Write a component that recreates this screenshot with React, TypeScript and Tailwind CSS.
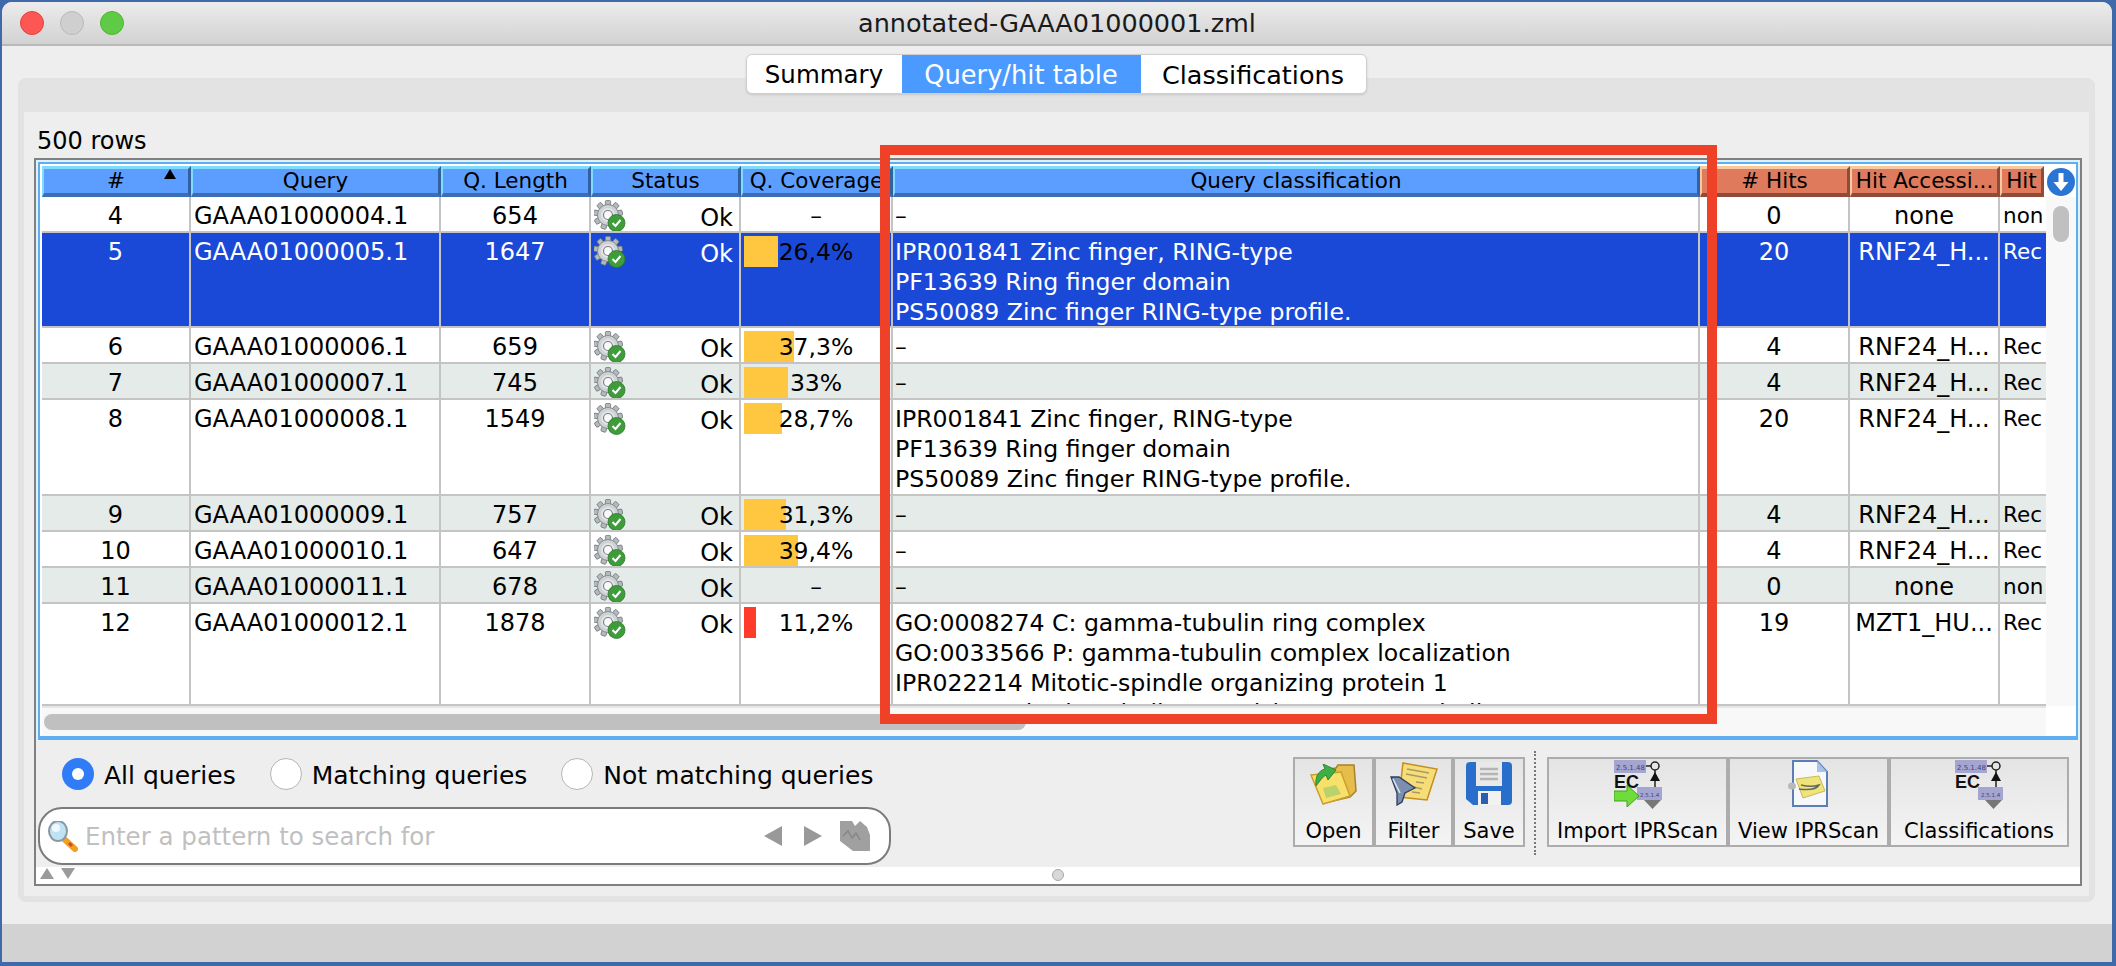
import { ReactNode } from "react";

const FONT = "font-['DejaVu_Sans',sans-serif]";

// Column widths in px, first to last
const COLS = {
  num: "w-[149px]",
  query: "w-[250px]",
  len: "w-[150px]",
  status: "w-[150px]",
  cov: "w-[152px]",
  cls: "w-[807px]",
  hits: "w-[150px]",
  acc: "w-[150px]",
  hit: "w-[44px]",
};

interface Row {
  id: number;
  query: string;
  len: number;
  cov?: string;
  bar?: number;
  barRed?: boolean;
  cls: string[];
  hits: number;
  acc: string;
  hit: string;
  h: string;
  zebra?: boolean;
  selected?: boolean;
}

const ring = [
  "IPR001841 Zinc finger, RING-type",
  "PF13639 Ring finger domain",
  "PS50089 Zinc finger RING-type profile.",
];

const rows: Row[] = [
  { id: 4, query: "GAAA01000004.1", len: 654, cls: ["–"], hits: 0, acc: "none", hit: "non", h: "h-[36px]" },
  { id: 5, query: "GAAA01000005.1", len: 1647, cov: "26,4%", bar: 34, cls: ring, hits: 20, acc: "RNF24_H...", hit: "Rec", h: "h-[95px]", selected: true },
  { id: 6, query: "GAAA01000006.1", len: 659, cov: "37,3%", bar: 50, cls: ["–"], hits: 4, acc: "RNF24_H...", hit: "Rec", h: "h-[36px]" },
  { id: 7, query: "GAAA01000007.1", len: 745, cov: "33%", bar: 44, cls: ["–"], hits: 4, acc: "RNF24_H...", hit: "Rec", h: "h-[36px]", zebra: true },
  { id: 8, query: "GAAA01000008.1", len: 1549, cov: "28,7%", bar: 38, cls: ring, hits: 20, acc: "RNF24_H...", hit: "Rec", h: "h-[96px]" },
  { id: 9, query: "GAAA01000009.1", len: 757, cov: "31,3%", bar: 42, cls: ["–"], hits: 4, acc: "RNF24_H...", hit: "Rec", h: "h-[36px]", zebra: true },
  { id: 10, query: "GAAA01000010.1", len: 647, cov: "39,4%", bar: 54, cls: ["–"], hits: 4, acc: "RNF24_H...", hit: "Rec", h: "h-[36px]" },
  { id: 11, query: "GAAA01000011.1", len: 678, cls: ["–"], hits: 0, acc: "none", hit: "non", h: "h-[36px]", zebra: true },
  {
    id: 12,
    query: "GAAA01000012.1",
    len: 1878,
    cov: "11,2%",
    bar: 12,
    barRed: true,
    cls: [
      "GO:0008274 C: gamma-tubulin ring complex",
      "GO:0033566 P: gamma-tubulin complex localization",
      "IPR022214 Mitotic-spindle organizing protein 1",
      "PF12554 Mitotic-spindle organizing gamma-tubulin",
    ],
    hits: 19,
    acc: "MZT1_HU...",
    hit: "Rec",
    h: "h-[102px]",
  },
];

function GearOk() {
  return (
    <svg width="32" height="33" viewBox="0 0 32 33" className="shrink-0">
      <g transform="translate(14 15)">
        {[0, 40, 80, 120, 160, 200, 240, 280, 320].map((a) => (
          <rect key={a} x="-2.6" y="-14.5" width="5.2" height="7" rx="1" fill="#b4b9bc" stroke="#6f7579" strokeWidth="0.8" transform={`rotate(${a})`} />
        ))}
        <circle r="10.5" fill="#ced2d4" stroke="#858b8f" strokeWidth="1" />
        <circle r="7" fill="#e3e5e6" />
        <circle r="4.5" fill="#fafafa" stroke="#7b8185" strokeWidth="1.2" />
      </g>
      <circle cx="22.5" cy="23" r="8.5" fill="#3f9c3b" stroke="#2d7a2b" strokeWidth="0.8" />
      <path d="M18.500 23l3 3 5-6" fill="none" stroke="#fff" strokeWidth="2" />
    </svg>
  );
}

function HeadCell({ w, red, children }: { w: string; red?: boolean; children?: ReactNode }) {
  return (
    <div
      className={`${w} h-full shrink-0 flex items-center justify-center relative overflow-hidden whitespace-nowrap pt-px text-[21.5px] text-black border-t-[3px] border-b-[4px] border-l-2 border-r-[3px] ${
        red
          ? "bg-[#df7a5d] border-t-[#f8c9a0] border-l-[#f8c9a0] border-b-[#8f4c3a] border-r-[#8f4c3a]"
          : "bg-[#5c9eff] border-t-[#7fdcff] border-l-[#7fdcff] border-b-[#3c6db5] border-r-[#33619f]"
      }`}
    >
      {children}
    </div>
  );
}

function Cell({ w, className, children }: { w: string; className?: string; children?: ReactNode }) {
  return <div className={`${w} shrink-0 h-full border-r-2 border-[#c4c4c4] overflow-hidden whitespace-nowrap ${className ?? ""}`}>{children}</div>;
}

function TableRow({ row }: { row: Row }) {
  const bg = row.selected ? "bg-[#1a49d8] text-white" : row.zebra ? "bg-[#e4ebe9] text-black" : "bg-white text-black";
  return (
    <div className={`flex ${row.h} ${bg} border-b-2 border-[#c4c4c4] text-[24px] leading-[30px]`}>
      <Cell w={COLS.num} className="text-center pt-[4px]">{row.id}</Cell>
      <Cell w={COLS.query} className="pl-[3px] pt-[4px]">{row.query}</Cell>
      <Cell w={COLS.len} className="text-center pt-[4px]">{row.len}</Cell>
      <Cell w={COLS.status} className="flex justify-between pl-[3px] pr-[6px] pt-[3px]">
        <GearOk />
        <span className="pt-[3px]">Ok</span>
      </Cell>
      <Cell w={COLS.cov} className="relative pt-[4px] text-center text-black">
        {row.bar && (
          <div className={`absolute left-[3px] top-[3px] h-[31px] ${row.barRed ? "bg-[#ff3b2b]" : "bg-[#ffc63f]"}`} style={{ width: row.bar }} />
        )}
        <span className="relative text-[23.5px]">{row.cov ?? "–"}</span>
      </Cell>
      <Cell w={COLS.cls} className="pl-[2px] pt-[4px] text-[23.6px]">
        {row.cls.map((line) => (
          <div key={line}>{line}</div>
        ))}
      </Cell>
      <Cell w={COLS.hits} className="text-center pt-[4px]">{row.hits}</Cell>
      <Cell w={COLS.acc} className="text-center pt-[4px]">{row.acc}</Cell>
      <div className={`${COLS.hit} shrink-0 pl-[3px] pt-[4px] text-[21.5px] overflow-hidden`}>{row.hit}</div>
    </div>
  );
}

function Radio({ label, checked }: { label: string; checked?: boolean }) {
  return (
    <div className="flex items-center gap-[10px]">
      {checked ? (
        <span className="w-[32px] h-[32px] rounded-full bg-[#2f7cf6] flex items-center justify-center">
          <span className="w-[12px] h-[12px] rounded-full bg-white" />
        </span>
      ) : (
        <span className="w-[32px] h-[32px] rounded-full bg-white border border-[#b5b5b5]" />
      )}
      <span className="text-[25px] leading-none pt-[2px] text-black">{label}</span>
    </div>
  );
}

function ToolButton({ w, label, children }: { w: string; label: string; children: ReactNode }) {
  return (
    <div className={`${w} h-full shrink-0 flex flex-col items-center border-2 border-[#acacac] bg-gradient-to-b from-[#e4e4e4] to-[#f4f4f4]`}>
      <div className="h-[50px] flex items-center justify-center">{children}</div>
      <span className="text-[21px] leading-[21px] mt-[12px] text-black whitespace-nowrap">{label}</span>
    </div>
  );
}

function FolderIcon() {
  return (
    <svg width="47" height="41" viewBox="0 0 47 41">
      <path d="M20 5l6-1 2-3 16 0 2 26-6 6-26 6z" fill="#e6bd4a" stroke="#a9812a" strokeWidth="1.500" />
      <path d="M1 11l30-3 9 24-27 8z" fill="#f8e06a" stroke="#c9a02e" strokeWidth="1.500" />
      <path d="M13 24l13-3 5 9-15 4z" fill="#b9d36a" />
      <path d="M6 22C5 13 8 7 15 5l-2-5 13 6-8 10-2-5c-4 2-6 6-10 11z" fill="#3fae45" stroke="#2b8a33" />
    </svg>
  );
}

function FilterIcon() {
  return (
    <svg width="48" height="44" viewBox="0 0 48 44">
      <path d="M13 1l34 6-10 31-28-3z" fill="#f6dd78" stroke="#c58d22" strokeWidth="1.500" />
      <path d="M17 7l22 4M16 12l21 4M26 20l8 1M24 25l8 2M22 30l8 1" stroke="#a99a63" strokeWidth="1.300" />
      <path d="M1 15h8l16 11-10 5-3 9-5 3 0-12z" fill="#7d8fae" stroke="#2c3e60" strokeWidth="1.300" />
      <path d="M3 17l7 14" stroke="#dde3ec" strokeWidth="1.500" />
    </svg>
  );
}

function SaveIcon() {
  return (
    <svg width="46" height="45" viewBox="0 0 46 45">
      <path d="M4 0h38a4 4 0 0 1 4 4v35a4 4 0 0 1-4 4H7l-7-6V4a4 4 0 0 1 4-4z" fill="#2a6ecb" />
      <rect x="10" y="0" width="26" height="24" fill="#e9e9e9" />
      <path d="M14 7h18M14 12h18M14 17h18" stroke="#b5b5b5" strokeWidth="2.500" />
      <rect x="12" y="29" width="23" height="14" fill="#f2f2f2" />
      <rect x="15" y="31" width="7" height="11" fill="#2a5fb0" />
    </svg>
  );
}

function EcIcon({ arrow }: { arrow?: boolean }) {
  return (
    <svg width="48" height="49" viewBox="0 0 48 49">
      <rect x="0" y="0" width="32" height="13" fill="#a5a5d2" />
      <text x="2" y="9.500" fontSize="7" fill="#44446e" fontFamily="'DejaVu Sans', sans-serif">2.5.1.48</text>
      <path d="M32 6h5" stroke="#222" strokeWidth="1.500" />
      <circle cx="41" cy="6" r="4" fill="none" stroke="#222" strokeWidth="1.500" />
      <path d="M41 10v18" stroke="#222" strokeWidth="1.500" />
      <path d="M36 21l5-9 5 9z" fill="#111" />
      <text x="0" y="28" fontSize="18" fontWeight="700" fill="#111" fontFamily="'Liberation Sans', sans-serif">EC</text>
      <rect x="23" y="27" width="25" height="13" fill="#a5a5d2" />
      <text x="26" y="36.500" fontSize="5.500" fill="#44446e" fontFamily="'DejaVu Sans', sans-serif">2.5.1.4</text>
      <path d="M30 40h17l-8.500 9z" fill="#777" />
      {arrow && <path d="M0 31h13v-6l12 11-12 11v-6H0z" fill="#6fdc3c" stroke="#3ea21f" />}
    </svg>
  );
}

function ViewIcon() {
  return (
    <svg width="41" height="48" viewBox="0 0 41 48">
      <path d="M5 1h24l10 11v34H5z" fill="#f6f8fc" stroke="#5a7eb5" strokeWidth="2" />
      <path d="M29 1v11h10z" fill="#a8c2ea" />
      <path d="M8 19l23-3 6 15-22 7z" fill="#efe37b" stroke="#c9ba52" />
      <path d="M13 25c8 2 15 1 18 0-3 5-12 5-20 4" fill="none" stroke="#666" strokeWidth="1.500" />
      <ellipse cx="4" cy="26" rx="4" ry="3.500" fill="#b9b9b9" />
    </svg>
  );
}

export default function App() {
  return (
    <div className={`relative w-[2116px] h-[966px] overflow-hidden bg-[#3f69a9] ${FONT}`}>
      <div className="ml-[2px] mr-[4px] mt-[2px] h-[960px] rounded-t-[10px] bg-[#eeeeee] flex flex-col overflow-hidden">
        {/* Title bar */}
        <div className="h-[44px] shrink-0 flex items-center relative bg-gradient-to-b from-[#ececec] to-[#d2d2d2] border-b-2 border-[#b9b9b9]">
          <div className="flex gap-[16px] pl-[18px]">
            <span className="w-[24px] h-[24px] rounded-full bg-[#fc5753] border border-[#e0443e]" />
            <span className="w-[24px] h-[24px] rounded-full bg-[#cfcfcf] border border-[#b9b9b9]" />
            <span className="w-[24px] h-[24px] rounded-full bg-[#5fca45] border border-[#4fb536]" />
          </div>
          <div className="absolute inset-0 flex items-center justify-center text-[25.5px] text-[#1a1a1a]">annotated-GAAA01000001.zml</div>
        </div>

        {/* Tabs + panel */}
        <div className="flex-1 relative pt-[32px] pl-[16px] pr-[17px]">
          <div className="absolute top-[8px] left-0 right-0 flex justify-center z-10 pr-[2px]">
            <div className="flex h-[40px] rounded-[6px] border border-[#cfcfcf] bg-white overflow-hidden shadow-sm">
              <div className="w-[155px] flex items-center justify-center pt-[2px] text-[24.5px] text-black">Summary</div>
              <div className="w-[239px] flex items-center justify-center pt-[2px] text-[25.7px] bg-[#4b9aff] text-white">Query/hit table</div>
              <div className="w-[225px] flex items-center justify-center pt-[2px] text-[25.5px] text-black">Classifications</div>
            </div>
          </div>

          <div className="h-[824px] rounded-[8px] border-2 border-[#e2e2e2] bg-[#e3e3e3] pt-[32px] px-[4px] pb-[4px]">
            <div className="h-full bg-[#eeeeee] flex flex-col pl-[10px] pr-[7px]">
              <div className="h-[46px] shrink-0 flex items-center pl-[3px] pt-[11px] text-[24px] text-black">500 rows</div>

              <div className="h-[728px] shrink-0 border-2 border-[#808080] bg-white flex flex-col">
                {/* Table */}
                <div className="h-[580px] shrink-0 bg-[#dff1fb] pt-[2px] px-[2px]">
                  <div className="h-[578px] border-x-2 border-t-2 border-b-4 border-[#5eaef0] bg-white pt-[2px] px-[2px]">
                    <div className="flex">
                      <div className="w-[2004px] overflow-hidden shrink-0">
                        <div className="flex h-[31px]">
                          <HeadCell w={COLS.num}>
                            #
                            <svg width="12" height="10" viewBox="0 0 12 10" className="absolute right-[12px] top-[0px]">
                              <path d="M6 0l6 10H0z" fill="#000" />
                            </svg>
                          </HeadCell>
                          <HeadCell w={COLS.query}>Query</HeadCell>
                          <HeadCell w={COLS.len}>Q. Length</HeadCell>
                          <HeadCell w={COLS.status}>Status</HeadCell>
                          <HeadCell w={COLS.cov}>Q. Coverage</HeadCell>
                          <HeadCell w={COLS.cls}>Query classification</HeadCell>
                          <HeadCell w={COLS.hits} red># Hits</HeadCell>
                          <HeadCell w={COLS.acc} red>Hit Accessi...</HeadCell>
                          <HeadCell w={COLS.hit} red>Hit</HeadCell>
                        </div>
                        <div className="h-[509px] overflow-hidden">
                          {rows.map((r) => (
                            <TableRow key={r.id} row={r} />
                          ))}
                        </div>
                        <div className="h-[30px] bg-[#f8f8f8] border-t-2 border-[#e6e6e6] pt-[6px]">
                          <div className="ml-[2px] w-[982px] h-[16px] rounded-full bg-[#c0c0c0]" />
                        </div>
                      </div>
                      <div className="w-[30px] shrink-0 flex flex-col">
                        <div className="h-[31px] flex items-center justify-center">
                          <span className="w-[28px] h-[28px] rounded-full bg-[#2a74d4] flex items-center justify-center">
                            <svg width="18" height="20" viewBox="0 0 18 20">
                              <path d="M6.500 1h5v9h5L9 19 1.500 10h5z" fill="#fff" />
                            </svg>
                          </span>
                        </div>
                        <div className="h-[509px] bg-[#f8f8f8] flex justify-center pt-[9px]">
                          <div className="w-[16px] h-[36px] rounded-full bg-[#c0c0c0]" />
                        </div>
                      </div>
                    </div>
                  </div>
                </div>

                {/* Search + toolbar */}
                <div className="h-[127px] shrink-0 bg-[#eeeeee] flex pl-[2px] pr-[11px] pt-[18px]">
                  <div className="w-[853px] shrink-0 flex flex-col">
                    <div className="flex h-[32px] items-center pl-[24px] gap-[34px]">
                      <Radio label="All queries" checked />
                      <Radio label="Matching queries" />
                      <Radio label="Not matching queries" />
                    </div>
                    <div className="mt-[17px] h-[58px] border-2 border-[#7b7b7b] rounded-[24px] bg-white flex items-center pl-[8px] pr-[19px]">
                      <svg width="31" height="31" viewBox="0 0 31 31">
                        <path d="M15 17l12 11" stroke="#f0a020" strokeWidth="6" strokeLinecap="round" />
                        <path d="M21 22l3 3" stroke="#d4482c" strokeWidth="3" />
                        <ellipse cx="10" cy="10" rx="9" ry="10" fill="#bfe3f4" stroke="#8a98a0" strokeWidth="2" />
                        <circle cx="8" cy="7" r="4" fill="#eff9fd" />
                      </svg>
                      <span className="ml-[6px] pt-[3px] text-[24.5px] text-[#c0c0c0]">Enter a pattern to search for</span>
                      <div className="ml-auto flex items-center">
                        <svg width="18" height="20" viewBox="0 0 18 20">
                          <path d="M18 0v20L0 10z" fill="#999" />
                        </svg>
                        <svg width="18" height="20" viewBox="0 0 18 20" className="ml-[22px]">
                          <path d="M0 0v20l18-10z" fill="#999" />
                        </svg>
                        <svg width="30" height="30" viewBox="0 0 30 30" className="ml-[18px]">
                          <path d="M0 0h12l3 5 5-5 7 6 3 8v16H13L0 20z" fill="#a0a0a0" />
                          <path d="M3 15l5-5 4 7 4-5 4 7" fill="none" stroke="#858585" strokeWidth="1.500" />
                        </svg>
                      </div>
                    </div>
                  </div>

                  <div className="flex-1 flex justify-end -mt-px">
                    <div className="flex h-[90px] items-stretch">
                      <ToolButton w="w-[81px]" label="Open"><FolderIcon /></ToolButton>
                      <ToolButton w="w-[79px]" label="Filter"><FilterIcon /></ToolButton>
                      <ToolButton w="w-[72px]" label="Save"><SaveIcon /></ToolButton>
                      <div className="w-[22px] flex justify-center -my-[6px]">
                        <div className="h-[104px] border-l-2 border-dotted border-[#777] -ml-[2px]" />
                      </div>
                      <ToolButton w="w-[181px]" label="Import IPRScan"><EcIcon arrow /></ToolButton>
                      <ToolButton w="w-[161px]" label="View IPRScan"><ViewIcon /></ToolButton>
                      <ToolButton w="w-[180px]" label="Classifications"><EcIcon /></ToolButton>
                    </div>
                  </div>
                </div>

                {/* Split pane handle */}
                <div className="flex-1 bg-white flex">
                  <div className="w-[60px] flex items-center gap-[7px] pl-[4px] h-[13px]">
                    <svg width="14" height="11" viewBox="0 0 14 11"><path d="M7 0l7 11H0z" fill="#9b9b9b" /></svg>
                    <svg width="14" height="11" viewBox="0 0 14 11"><path d="M7 11l7-11H0z" fill="#9b9b9b" /></svg>
                  </div>
                  <div className="flex-1 flex justify-center pt-[2px] pr-[60px]">
                    <span className="w-[12px] h-[12px] rounded-full bg-[#d8d8d8] border border-[#a8a8a8]" />
                  </div>
                </div>
              </div>
            </div>
          </div>
        </div>

        {/* Status bar */}
        <div className="h-[38px] shrink-0 bg-[#d2d2d2]" />
      </div>

      {/* Annotation frame over the table */}
      <div className="absolute left-[880px] top-[145px] w-[837px] h-[579px] border-[10px] border-[#ee4127]" />
    </div>
  );
}
